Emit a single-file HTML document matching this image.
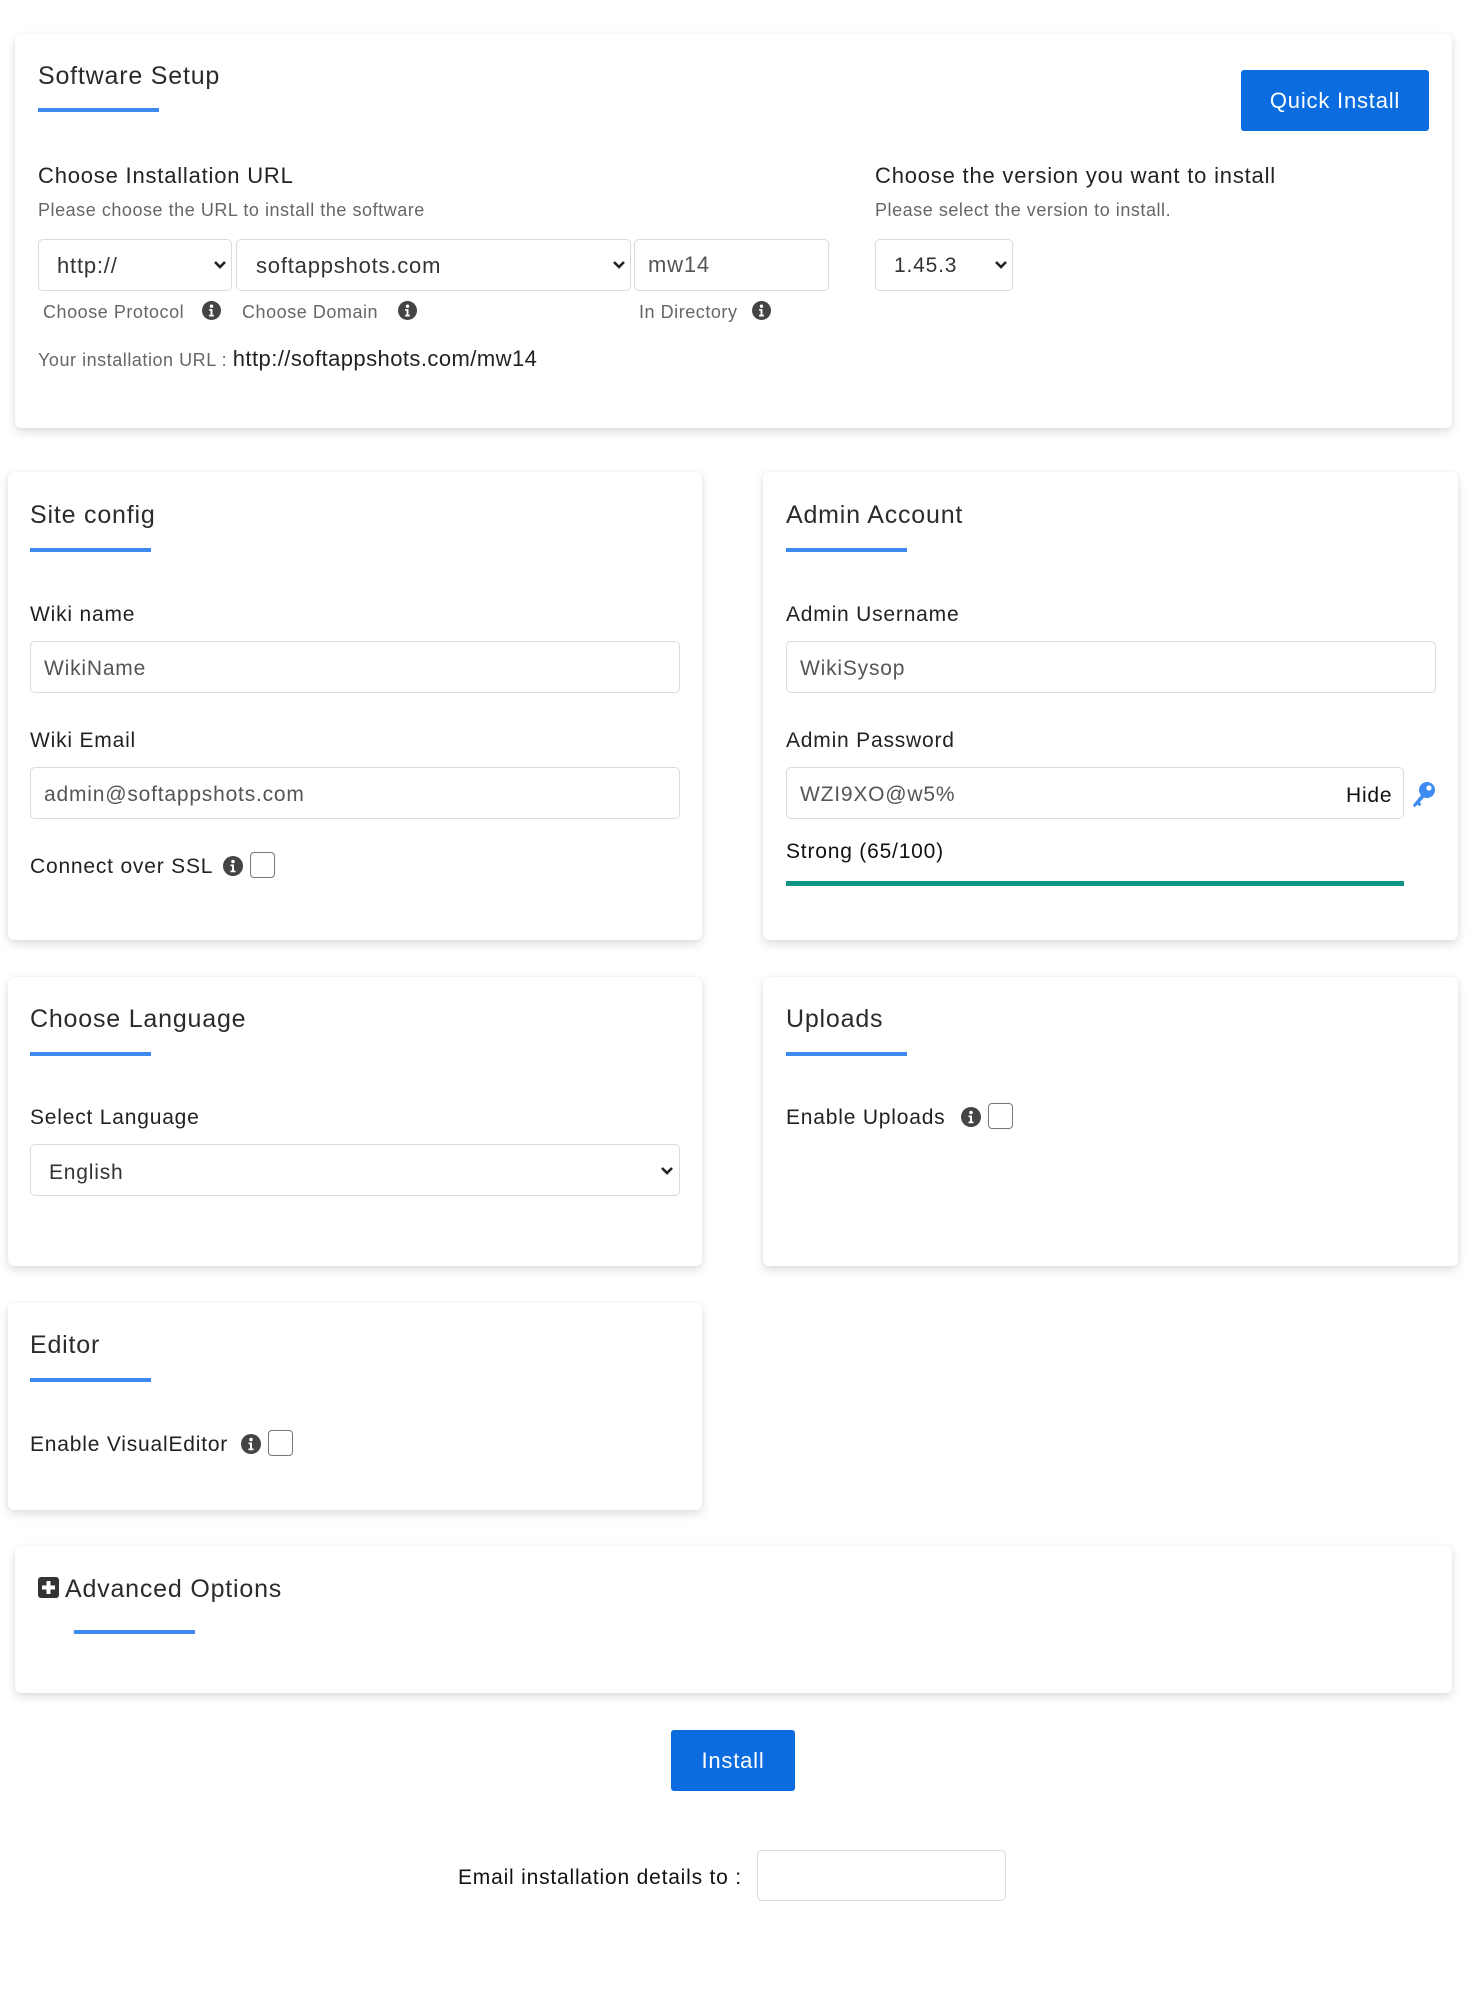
<!DOCTYPE html>
<html><head><meta charset="utf-8">
<style>
*{box-sizing:border-box;margin:0;padding:0}
body{width:1473px;height:2000px;background:#fff;font-family:"Liberation Sans",sans-serif;color:#222;position:relative;overflow:hidden;letter-spacing:0.05em}
.card{position:absolute;background:#fff;border-radius:6px;box-shadow:0 4px 10px rgba(0,0,0,0.13),0 0 3px rgba(0,0,0,0.05)}
.t{position:absolute;white-space:nowrap;line-height:30px}
.ul{position:absolute;height:4px;background:#3d8bf2;width:121px}
.box{position:absolute;border:1.5px solid #d7dbe0;border-radius:5px;background:#fff}
.inp{position:absolute;font-size:21px;color:#555;line-height:30px}
.h{font-size:25px;color:#2b2b2b}
.lbl{font-size:21px;color:#222}
.sm{font-size:18px;color:#666;letter-spacing:0.03em}
.chev{position:absolute;width:14px;height:10px}
.info{position:absolute;width:20px;height:20px}
.cb{position:absolute;width:25px;height:26px;border:1.5px solid #777;border-radius:4px;background:#fff}
.btn{position:absolute;background:#0a6cdf;color:#fff;font-size:22px;display:flex;align-items:center;justify-content:center;border-radius:3px}
</style></head><body>

<svg width="0" height="0" style="position:absolute">
<defs>
<symbol id="i" viewBox="0 0 20 20"><circle cx="10" cy="10" r="10" fill="#444"/><circle cx="10" cy="5.5" r="1.8" fill="#fff"/><path d="M7.5 8.5h3.5v6h1.5v1.8h-5v-1.8h1.5v-4.2h-1.5z" fill="#fff"/></symbol>
<symbol id="c" viewBox="0 0 14 10"><path d="M2 2l5 5 5-5" stroke="#222" stroke-width="2.6" fill="none"/></symbol>
</defs></svg>

<!-- Top card -->
<div class="card" style="left:15px;top:34px;width:1437px;height:394px"></div>
<div class="t h" style="left:38px;top:61px">Software Setup</div>
<div class="ul" style="left:38px;top:108px"></div>
<div class="btn" style="left:1241px;top:70px;width:188px;height:61px">Quick Install</div>
<div class="t lbl" style="left:38px;top:161px;font-size:22px">Choose Installation URL</div>
<div class="t sm" style="left:38px;top:195px">Please choose the URL to install the software</div>
<div class="t lbl" style="left:875px;top:161px;font-size:22px">Choose the version you want to install</div>
<div class="t sm" style="left:875px;top:195px">Please select the version to install.</div>

<div class="box" style="left:38px;top:239px;width:194px;height:52px"></div>
<div class="inp" style="left:57px;top:251px;color:#333;font-size:22px">http://</div>
<svg class="chev" style="left:213px;top:260px"><use href="#c"/></svg>
<div class="box" style="left:236px;top:239px;width:395px;height:52px"></div>
<div class="inp" style="left:256px;top:251px;color:#333;font-size:22px">softappshots.com</div>
<svg class="chev" style="left:612px;top:260px"><use href="#c"/></svg>
<div class="box" style="left:634px;top:239px;width:195px;height:52px"></div>
<div class="inp" style="left:648px;top:250px;color:#555;font-size:22px">mw14</div>
<div class="box" style="left:875px;top:239px;width:138px;height:52px"></div>
<div class="inp" style="left:894px;top:251px;color:#333">1.45.3</div>
<svg class="chev" style="left:994px;top:260px"><use href="#c"/></svg>

<div class="t sm" style="left:43px;top:297px">Choose Protocol</div>
<svg class="info" style="left:202px;top:301px;width:19px;height:19px"><use href="#i"/></svg>
<div class="t sm" style="left:242px;top:297px">Choose Domain</div>
<svg class="info" style="left:398px;top:301px;width:19px;height:19px"><use href="#i"/></svg>
<div class="t sm" style="left:639px;top:297px">In Directory</div>
<svg class="info" style="left:752px;top:301px;width:19px;height:19px"><use href="#i"/></svg>
<div class="t sm" style="left:38px;top:344px">Your installation URL : <span style="font-size:22px;color:#222;letter-spacing:0.02em">http://softappshots.com/mw14</span></div>

<!-- Site config -->
<div class="card" style="left:8px;top:472px;width:694px;height:468px"></div>
<div class="t h" style="left:30px;top:500px">Site config</div>
<div class="ul" style="left:30px;top:548px"></div>
<div class="t lbl" style="left:30px;top:600px">Wiki name</div>
<div class="box" style="left:30px;top:641px;width:650px;height:52px"></div>
<div class="inp" style="left:44px;top:654px">WikiName</div>
<div class="t lbl" style="left:30px;top:726px">Wiki Email</div>
<div class="box" style="left:30px;top:767px;width:650px;height:52px"></div>
<div class="inp" style="left:44px;top:780px">admin@softappshots.com</div>
<div class="t lbl" style="left:30px;top:852px">Connect over SSL</div>
<svg class="info" style="left:223px;top:856px"><use href="#i"/></svg>
<div class="cb" style="left:250px;top:852px"></div>

<!-- Admin -->
<div class="card" style="left:763px;top:472px;width:695px;height:468px"></div>
<div class="t h" style="left:786px;top:500px">Admin Account</div>
<div class="ul" style="left:786px;top:548px"></div>
<div class="t lbl" style="left:786px;top:600px">Admin Username</div>
<div class="box" style="left:786px;top:641px;width:650px;height:52px"></div>
<div class="inp" style="left:800px;top:654px">WikiSysop</div>
<div class="t lbl" style="left:786px;top:726px">Admin Password</div>
<div class="box" style="left:786px;top:767px;width:618px;height:52px"></div>
<div class="inp" style="left:800px;top:780px">WZI9XO@w5%</div>
<div class="t lbl" style="left:1346px;top:781px;color:#111">Hide</div>
<svg style="position:absolute;left:1410px;top:781px" width="26" height="28" viewBox="0 0 26 28"><circle cx="17" cy="9" r="8" fill="#3d8bf2"/><circle cx="19" cy="7" r="2.6" fill="#fff"/><path d="M12 13L3 24l1.5 2.5 3-3 1.8 1.8 2.2-2.2-1.8-1.8 5.5-6z" fill="#3d8bf2"/></svg>
<div class="t lbl" style="left:786px;top:837px;color:#111">Strong (65/100)</div>
<div style="position:absolute;left:786px;top:881px;width:618px;height:5px;background:#0b9583"></div>

<!-- Language -->
<div class="card" style="left:8px;top:977px;width:694px;height:289px"></div>
<div class="t h" style="left:30px;top:1004px">Choose Language</div>
<div class="ul" style="left:30px;top:1052px"></div>
<div class="t lbl" style="left:30px;top:1103px">Select Language</div>
<div class="box" style="left:30px;top:1144px;width:650px;height:52px"></div>
<div class="inp" style="left:49px;top:1158px;color:#333">English</div>
<svg class="chev" style="left:660px;top:1166px"><use href="#c"/></svg>

<!-- Uploads -->
<div class="card" style="left:763px;top:977px;width:695px;height:289px"></div>
<div class="t h" style="left:786px;top:1004px">Uploads</div>
<div class="ul" style="left:786px;top:1052px"></div>
<div class="t lbl" style="left:786px;top:1103px">Enable Uploads</div>
<svg class="info" style="left:961px;top:1107px"><use href="#i"/></svg>
<div class="cb" style="left:988px;top:1103px"></div>

<!-- Editor -->
<div class="card" style="left:8px;top:1303px;width:694px;height:207px"></div>
<div class="t h" style="left:30px;top:1330px">Editor</div>
<div class="ul" style="left:30px;top:1378px"></div>
<div class="t lbl" style="left:30px;top:1430px">Enable VisualEditor</div>
<svg class="info" style="left:241px;top:1434px"><use href="#i"/></svg>
<div class="cb" style="left:268px;top:1430px"></div>

<!-- Advanced -->
<div class="card" style="left:15px;top:1546px;width:1437px;height:147px"></div>
<svg style="position:absolute;left:38px;top:1577px" width="21" height="21" viewBox="0 0 21 21"><rect width="21" height="21" rx="3" fill="#333"/><path d="M8.5 4h4v4.5H17v4h-4.5V17h-4v-4.5H4v-4h4.5z" fill="#fff"/></svg>
<div class="t h" style="left:65px;top:1574px">Advanced Options</div>
<div class="ul" style="left:74px;top:1630px"></div>

<div class="btn" style="left:671px;top:1730px;width:124px;height:61px">Install</div>
<div class="t lbl" style="left:458px;top:1863px;color:#111">Email installation details to :</div>
<div class="box" style="left:757px;top:1850px;width:249px;height:51px"></div>
</body></html>
